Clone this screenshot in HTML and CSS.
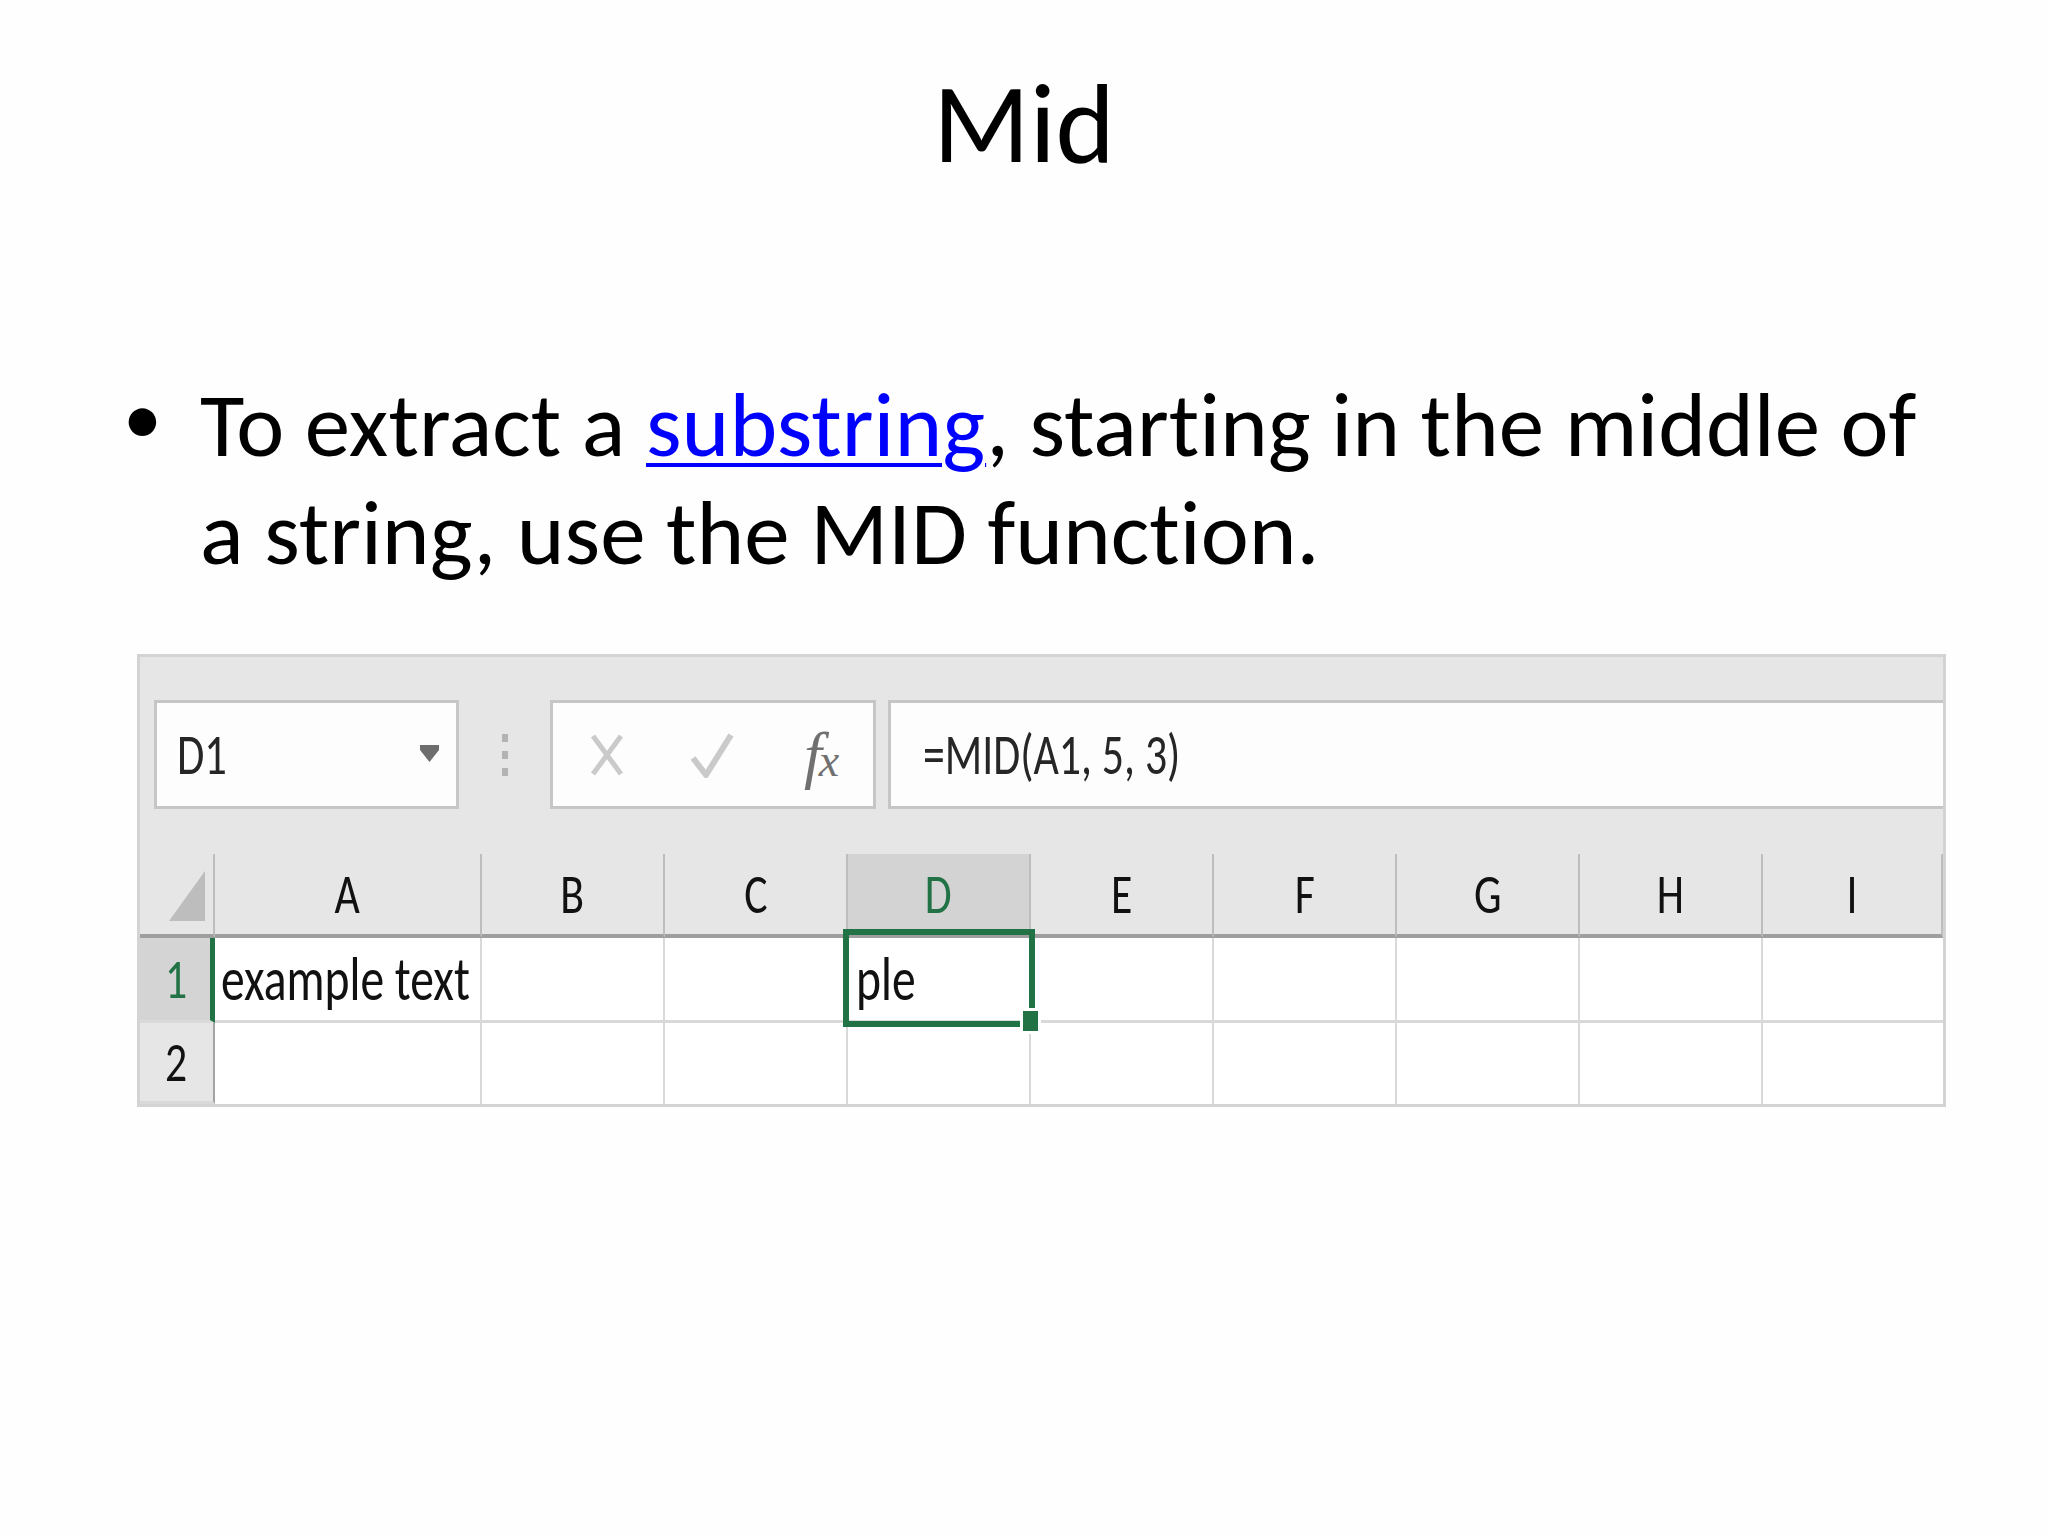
FILE: index.html
```html
<!DOCTYPE html>
<html>
<head>
<meta charset="utf-8">
<title>Mid</title>
<link rel="stylesheet" href="styles.css">
</head>
<body>
<div class="slide">
  <h1 class="title">Mid</h1>
  <ul class="bullets">
    <li><span class="mark">•</span><span class="btext">To extract a <a class="link" href="#">substring</a>, starting in the middle of<br>a string, use the MID function.</span></li>
  </ul>

  <div class="sheet">
    <div class="fbar">
      <div class="namebox">
        <span class="cond">D1</span>
        <svg class="dd" width="19" height="17" viewBox="0 0 19 17"><path d="M0 0H19V5L9.5 17L0 5Z" fill="#6d6d6d"/></svg>
      </div>
      <div class="grip"><i></i><i></i><i></i></div>
      <div class="fxbox">
        <svg class="ic-x" width="34" height="42" viewBox="0 0 34 42"><path d="M3 2L31 40M31 2L3 40" stroke="#cacaca" stroke-width="5" fill="none"/></svg>
        <svg class="ic-ok" width="44" height="46" viewBox="0 0 44 46"><path d="M3 26L16 43L41 3" stroke="#cacaca" stroke-width="6" fill="none" stroke-linejoin="round"/></svg>
        <span class="fx"><span class="fx-f">f</span><span class="fx-x">x</span></span>
      </div>
      <div class="input"><span class="cond formula">=MID(A1, 5, 3)</span></div>
    </div>

    <div class="grid">
      <div class="hcell corner"><svg width="36" height="50" viewBox="0 0 36 50"><path d="M36 0V50H0Z" fill="#bdbdbd"/></svg></div>
      <div class="hcell"><span class="lab">A</span></div>
      <div class="hcell"><span class="lab">B</span></div>
      <div class="hcell"><span class="lab">C</span></div>
      <div class="hcell active"><span class="lab">D</span></div>
      <div class="hcell"><span class="lab">E</span></div>
      <div class="hcell"><span class="lab">F</span></div>
      <div class="hcell"><span class="lab">G</span></div>
      <div class="hcell"><span class="lab">H</span></div>
      <div class="hcell"><span class="lab">I</span></div>

      <div class="rhead active"><span class="lab">1</span></div>
      <div class="cell"><span class="cond val">example text</span></div>
      <div class="cell"></div>
      <div class="cell"></div>
      <div class="cell selcell"><span class="cond val">ple</span><div class="sel"></div><div class="handle"></div></div>
      <div class="cell"></div>
      <div class="cell"></div>
      <div class="cell"></div>
      <div class="cell"></div>
      <div class="cell"></div>

      <div class="rhead"><span class="lab">2</span></div>
      <div class="cell last"></div>
      <div class="cell last"></div>
      <div class="cell last"></div>
      <div class="cell last"></div>
      <div class="cell last"></div>
      <div class="cell last"></div>
      <div class="cell last"></div>
      <div class="cell last"></div>
      <div class="cell last"></div>
    </div>
  </div>
</div>
</body>
</html>
```

FILE: styles.css
```css
html, body {
  margin: 0;
  padding: 0;
  background: #fefefe;
}

.slide {
  width: 2048px;
  height: 1536px;
  font-family: "Carlito", "Lato", "Noto Sans", sans-serif;
  font-variant-ligatures: none;
  color: #000;
  overflow: hidden;
}

.title {
  margin: 55px 0 0 0;
  font-size: 113px;
  line-height: 136px;
  font-weight: 400;
  text-align: center;
}

.bullets {
  list-style: none;
  margin: 180px 0 0 127px;
  padding: 0;
}

.bullets li {
  display: flex;
  font-size: 91px;
  line-height: 108px;
}

.mark {
  width: 77px;
  flex: none;
  font-size: 78px;
  margin-left: -4px;
  margin-top: -7px;
}

.btext {
  white-space: nowrap;
}

.link {
  color: #0000ff;
  text-decoration: underline;
  text-decoration-thickness: 4px;
  text-underline-offset: 7px;
}

/* spreadsheet */
.sheet {
  margin: 67px 0 0 137px;
  width: 1809px;
  box-sizing: border-box;
  border: 3px solid #d3d3d3;
  background: #e6e6e6;
}

.cond {
  display: inline-block;
  transform: scaleX(0.78);
  transform-origin: left center;
  white-space: nowrap;
}

.cond.formula {
  transform: scaleX(0.755);
}

.fbar {
  display: flex;
  align-items: center;
  padding: 43px 0 45px 14px;
}

.namebox {
  width: 305px;
  height: 109px;
  box-sizing: border-box;
  border: 3px solid #c6c6c6;
  background: #fdfdfd;
  display: flex;
  align-items: center;
  justify-content: space-between;
  padding: 0 17px 0 20px;
  font-size: 57px;
  color: #262626;
}

.dd {
  display: block;
  margin-top: -2px;
}

.grip {
  margin: 0 42px 0 43px;
  display: flex;
  flex-direction: column;
  gap: 9px;
}

.grip i {
  display: block;
  width: 6px;
  height: 8px;
  background: #b3b3b3;
}

.fxbox {
  width: 326px;
  height: 109px;
  box-sizing: border-box;
  border: 3px solid #c6c6c6;
  background: #fdfdfd;
  display: flex;
  align-items: center;
  padding-left: 37px;
}

.ic-x {
  display: block;
}

.ic-ok {
  display: block;
  margin-left: 66px;
}

.fx {
  margin-left: 70px;
  font-family: "Liberation Serif", serif;
  font-style: italic;
  color: #707070;
  display: flex;
  align-items: baseline;
}

.fx-f {
  font-size: 64px;
}

.fx-x {
  font-size: 46px;
  margin-left: -3px;
}

.input {
  flex: 1;
  height: 109px;
  box-sizing: border-box;
  border: 3px solid #c6c6c6;
  border-right: none;
  background: #fdfdfd;
  margin-left: 12px;
  display: flex;
  align-items: center;
  padding-left: 32px;
  font-size: 58px;
  color: #262626;
}

.grid {
  display: grid;
  grid-template-columns: 75px 267px repeat(7, 183px) 1fr;
  grid-template-rows: 84px 85px 81px;
}

.hcell {
  box-sizing: border-box;
  border-right: 2px solid #bdbdbd;
  border-bottom: 4px solid #9e9e9e;
  background: #e6e6e6;
  display: flex;
  align-items: center;
  justify-content: center;
  font-size: 56px;
  color: #111;
}

.hcell:last-child {
  border-right: none;
}

.hcell.corner {
  justify-content: flex-end;
  align-items: flex-end;
  padding: 0 8px 13px 0;
}

.hcell.corner svg {
  display: block;
}

.hcell.active {
  background: #d3d3d3;
  color: #217346;
}

.lab {
  display: inline-block;
  transform: scaleX(0.78);
}

.rhead {
  box-sizing: border-box;
  background: #e6e6e6;
  border-right: 2px solid #a3a3a3;
  border-bottom: 3px solid #d9d9d9;
  display: flex;
  align-items: center;
  justify-content: center;
  font-size: 56px;
  color: #111;
}

.rhead.active {
  background: #d4d4d4;
  border-right: 5px solid #217346;
  color: #217346;
  padding-left: 3px;
}

.cell {
  box-sizing: border-box;
  background: #fff;
  border-right: 2px solid #d9d9d9;
  border-bottom: 3px solid #d9d9d9;
  display: flex;
  align-items: center;
  padding-left: 6px;
  font-size: 61px;
  color: #111;
}

.cell.last {
  border-bottom: none;
}

.cell:nth-child(10n) {
  border-right: none;
}

.selcell {
  position: relative;
  padding-left: 8px;
}

.sel {
  position: absolute;
  top: -9px;
  left: -5px;
  width: 192px;
  height: 98px;
  box-sizing: border-box;
  border: 6px solid #217346;
}

.handle {
  position: absolute;
  left: 175px;
  top: 73px;
  width: 15px;
  height: 20px;
  background: #217346;
  box-shadow: 0 0 0 3px #fff;
}
```
